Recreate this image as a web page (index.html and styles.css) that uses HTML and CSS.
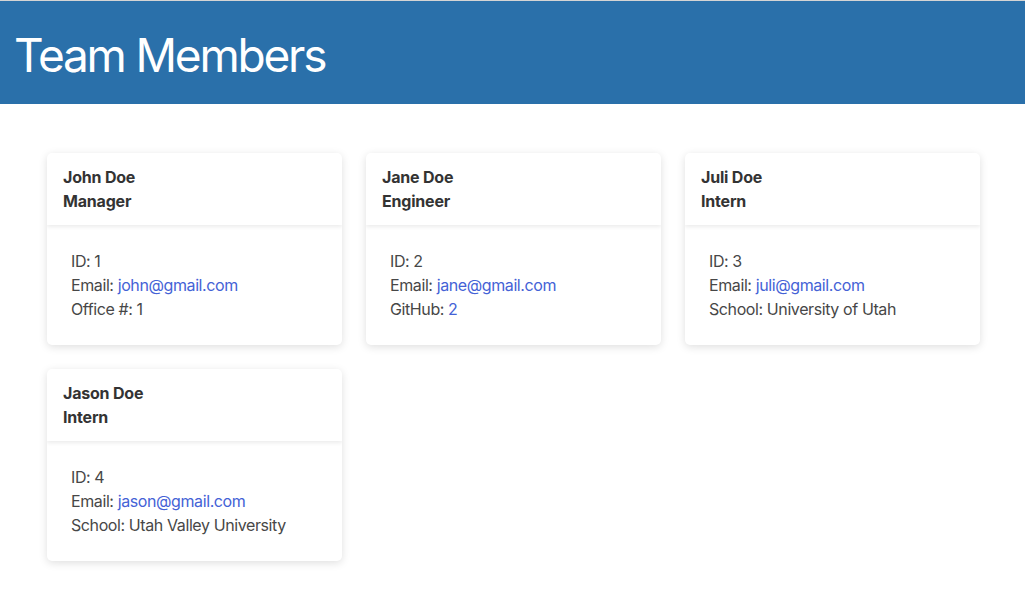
FILE: index.html
```html
<!DOCTYPE html>
<html lang="en">
<head>
<meta charset="utf-8">
<title>Team Members</title>
<link rel="stylesheet" href="styles.css">
</head>
<body>
<header class="banner">
  <h1 class="banner-title">Team Members</h1>
</header>
<main class="team">
  <section class="card">
    <div class="card-head"><div>John Doe</div><div>Manager</div></div>
    <div class="card-body">
      <div>ID: 1</div>
      <div>Email: <a href="#">john@gmail.com</a></div>
      <div>Office #: 1</div>
    </div>
  </section>
  <section class="card">
    <div class="card-head"><div>Jane Doe</div><div>Engineer</div></div>
    <div class="card-body">
      <div>ID: 2</div>
      <div>Email: <a href="#">jane@gmail.com</a></div>
      <div>GitHub: <a href="#">2</a></div>
    </div>
  </section>
  <section class="card">
    <div class="card-head"><div>Juli Doe</div><div>Intern</div></div>
    <div class="card-body">
      <div>ID: 3</div>
      <div>Email: <a href="#">juli@gmail.com</a></div>
      <div>School: University of Utah</div>
    </div>
  </section>
  <section class="card">
    <div class="card-head"><div>Jason Doe</div><div>Intern</div></div>
    <div class="card-body">
      <div>ID: 4</div>
      <div>Email: <a href="#">jason@gmail.com</a></div>
      <div>School: Utah Valley University</div>
    </div>
  </section>
</main>
</body>
</html>
```
FILE: styles.css
```css
html, body {
  margin: 0;
  padding: 0;
  background: #ffffff;
  font-family: Inter, "Noto Sans", "Liberation Sans", sans-serif;
  color: #444444;
}
body {
  border-top: 1px solid #d4d4d4;
}
.banner {
  background: #2a70aa;
  height: 103px;
  display: flex;
  align-items: center;
  padding: 0 14px;
}
.banner-title {
  margin: 0;
  color: #ffffff;
  font-weight: 400;
  font-size: 46px;
  letter-spacing: -2.2px;
  line-height: 1;
  padding-top: 5px;
}
.team {
  display: grid;
  grid-template-columns: repeat(3, 295px);
  gap: 24px;
  padding: 49px 0 40px 47px;
}
.card {
  background: #ffffff;
  border-radius: 5px;
  box-shadow: 0 2px 9px rgba(0, 0, 0, 0.13);
  overflow: hidden;
}
.card-head {
  padding: 12px 16px;
  font-size: 16px;
  line-height: 24px;
  font-weight: 700;
  letter-spacing: -0.2px;
  color: #333333;
  box-shadow: 0 2px 4px rgba(0, 0, 0, 0.08);
  position: relative;
}
.card-body {
  padding: 24px 24px;
  font-size: 16px;
  line-height: 24px;
  letter-spacing: -0.4px;
  color: #474747;
}
.card-body a {
  color: #4462d6;
  text-decoration: none;
}
```
